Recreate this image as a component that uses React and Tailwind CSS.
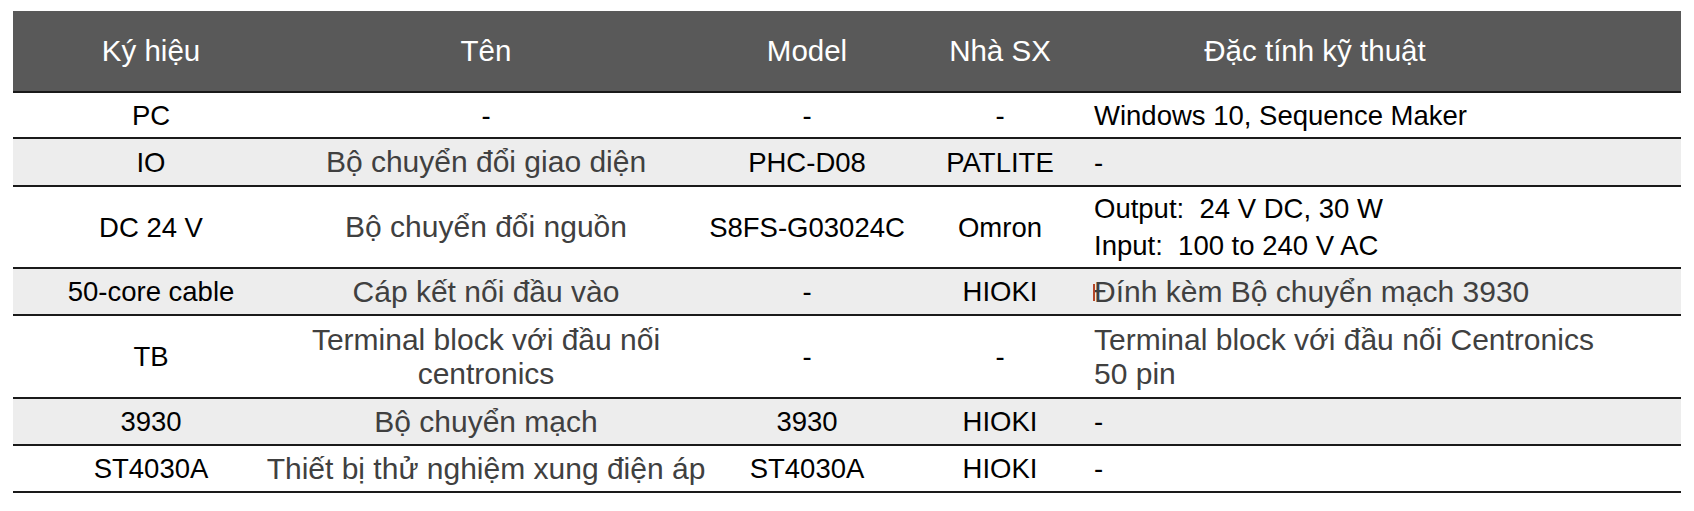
import clsx from 'clsx';

const cols = 'grid grid-cols-[276px_394px_248px_138px_1fr]';

const rows = [
	{ sym: 'PC', name: '-', model: '-', maker: '-', spec: ['Windows 10, Sequence Maker'], h: 'h-[46px]' },
	{ sym: 'IO', name: 'Bộ chuyển đổi giao diện', nameGray: true, model: 'PHC-D08', maker: 'PATLITE', spec: ['-'], h: 'h-[48px]', shade: true },
	{
		sym: 'DC 24 V',
		name: 'Bộ chuyển đổi nguồn',
		nameGray: true,
		model: 'S8FS-G03024C',
		maker: 'Omron',
		spec: ['Output:  24 V DC, 30 W', 'Input:  100 to 240 V AC'],
		h: 'h-[82px]'
	},
	{
		sym: '50-core cable',
		name: 'Cáp kết nối đầu vào',
		nameGray: true,
		model: '-',
		maker: 'HIOKI',
		spec: ['Đính kèm Bộ chuyển mạch 3930'],
		specGray: true,
		mark: true,
		h: 'h-[47px]',
		shade: true
	},
	{
		sym: 'TB',
		name: ['Terminal block với đầu nối', 'centronics'],
		nameGray: true,
		model: '-',
		maker: '-',
		spec: ['Terminal block với đầu nối Centronics', '50 pin'],
		specGray: true,
		h: 'h-[83px]'
	},
	{ sym: '3930', name: 'Bộ chuyển mạch', nameGray: true, model: '3930', maker: 'HIOKI', spec: ['-'], h: 'h-[47px]', shade: true },
	{ sym: 'ST4030A', name: 'Thiết bị thử nghiệm xung điện áp', nameGray: true, model: 'ST4030A', maker: 'HIOKI', spec: ['-'], h: 'h-[47px]' }
];

const black = 'text-[27.5px] text-black leading-[37px]';
const gray = 'text-[30px] text-[#404040] leading-[34px]';

export default function App() {
	return (
		<div className="min-h-[511px] bg-white pt-[11px] pl-[13px] font-['Liberation_Sans',Arial,sans-serif]">
			<div className="w-[1668px]">
				<div className={clsx(cols, 'h-[82px] items-center bg-[#595959] border-b-2 border-[#1a1a1a] text-[29.5px] text-white')}>
					<div className="text-center">Ký hiệu</div>
					<div className="text-center">Tên</div>
					<div className="text-center">Model</div>
					<div className="text-center">Nhà SX</div>
					<div className="text-center pr-[120px]">Đặc tính kỹ thuật</div>
				</div>

				{rows.map((r) => (
					<div
						key={r.sym}
						className={clsx(cols, r.h, 'items-center border-b-2 border-[#1a1a1a]', r.shade ? 'bg-[#ededed]' : 'bg-white')}
					>
						<div className={clsx('text-center', black)}>{r.sym}</div>
						<div className={clsx('flex flex-col items-center whitespace-nowrap', r.nameGray ? gray : black)}>
							{Array.isArray(r.name) ? r.name.map((l) => <div key={l}>{l}</div>) : <div>{r.name}</div>}
						</div>
						<div className={clsx('text-center', black)}>{r.model}</div>
						<div className={clsx('text-center', black)}>{r.maker}</div>
						<div className={clsx('relative pl-[25px] whitespace-pre', r.specGray ? gray : black)}>
							{r.mark && <span className="absolute left-[24px] top-[9px] h-[17px] w-[2px] bg-[#b4462a]" />}
							{r.spec.map((l) => (
								<div key={l}>{l}</div>
							))}
						</div>
					</div>
				))}
			</div>
		</div>
	);
}
